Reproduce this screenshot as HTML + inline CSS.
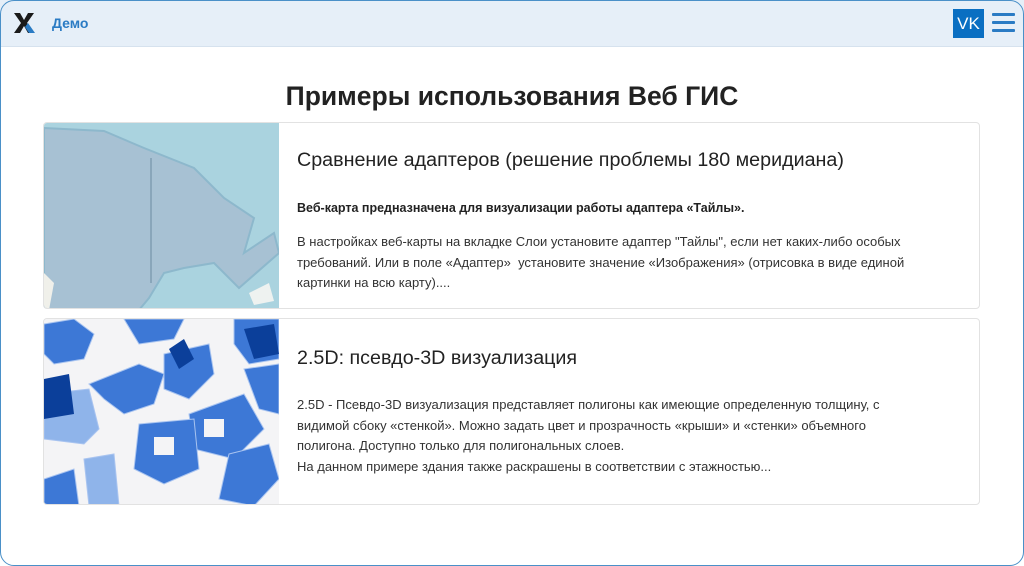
<!DOCTYPE html>
<html><head><meta charset="utf-8"><style>
*{box-sizing:border-box;margin:0;padding:0}
html,body{width:1024px;height:566px;overflow:hidden;background:#fff;font-family:"Liberation Sans",sans-serif;color:#222}
.frame{position:absolute;left:0;top:0;width:1024px;height:566px;border:1.5px solid #4a90c8;border-radius:14px;pointer-events:none;z-index:5}
.hdr{position:absolute;left:0;top:0;width:1024px;height:47px;background:#e6eff8;border-bottom:1px solid #d6e2ee}
.demo{position:absolute;left:52px;top:15px;font-size:14px;font-weight:bold;color:#2a7bc4}
.vk{position:absolute;left:953px;top:9px;width:31px;height:29px;background:#0a6fc2;color:#fff;font-size:17px;line-height:29px;text-align:center}
.burg{position:absolute;left:992px;top:13px;width:23px}
.burg i{display:block;height:2.5px;background:#2a7bc4;margin-bottom:5.5px;border-radius:1px}
h1{position:absolute;left:0;width:1024px;top:81px;text-align:center;font-size:26.5px;font-weight:bold;color:#222}
.card{position:absolute;left:43px;width:937px;height:187px;border:1px solid #e2e2e2;border-radius:4px;overflow:hidden}
.card svg{position:absolute;left:0;top:0}
.txt{position:absolute;left:253px;width:622px;font-size:13px;line-height:20.5px;color:#333}
.t{position:absolute;left:253px;font-size:19.7px;color:#222}
</style></head><body><div class="frame"></div>
<div class="hdr">
<svg style="position:absolute;left:13px;top:12px" width="22" height="22" viewBox="0 0 22 22"><path d="M1 1h6l4 7 4-7h6l-7 10 7 10h-6l-4-7-4 7H1l7-10z" fill="#1a1a1a"/><path d="M15 11l7 10h-6l-4-6z" fill="#2a7bc4"/></svg>
<div class="demo">Демо</div>
<div class="vk">VK</div>
<div class="burg"><i></i><i></i><i></i></div>
</div>
<h1>Примеры использования Веб ГИС</h1>
<div class="card" style="top:122px">
<svg width="235" height="187" viewBox="0 0 235 187"><rect width="235" height="187" fill="#aad3df"/><path d="M0 5 L60 8 100 25 150 45 180 75 210 95 200 130 230 110 235 130 195 165 170 140 140 145 120 150 105 175 95 187 0 187Z" fill="#a7c1d3" stroke="#8db8cc" stroke-width="2"/><line x1="107" y1="35" x2="107" y2="160" stroke="#6b8aa0" stroke-width="1"/><path d="M0 150 L10 160 5 187 0 187Z" fill="#f0f0ea"/><path d="M205 170 L225 160 230 178 210 182Z" fill="#eef2f0"/></svg>
<div class="t" style="top:26px">Сравнение адаптеров (решение проблемы 180 меридиана)</div>
<div class="txt" style="top:75px;font-weight:bold;color:#222;font-size:12.5px">Веб-карта предназначена для визуализации работы адаптера «Тайлы».</div>
<div class="txt" style="top:109px">В настройках веб-карты на вкладке Слои установите адаптер "Тайлы", если нет каких-либо особых требований. Или в поле «Адаптер»&nbsp; установите значение «Изображения» (отрисовка в виде единой картинки на всю карту)....</div>
</div>
<div class="card" style="top:318px">
<svg width="235" height="187" viewBox="0 0 235 187"><rect width="235" height="187" fill="#f4f4f6"/>
<g fill="#3d78d6" stroke="#a9c4f0" stroke-width="1">
<path d="M0 5 L30 0 50 15 40 40 10 45 0 35Z"/><path d="M80 0 L140 0 130 20 95 25Z"/><path d="M190 0 L235 0 235 40 205 45 190 25Z"/>
<path d="M45 65 L95 45 120 55 110 85 80 95 60 80Z"/><path d="M0 75 L45 70 55 110 40 125 0 120Z" fill="#8fb4ea"/>
<path d="M120 35 L165 25 170 55 145 80 120 70Z"/><path d="M145 95 L200 75 220 110 190 140 150 130Z"/>
<path d="M95 105 L150 100 155 150 120 165 90 150Z"/><path d="M185 135 L225 125 235 160 210 187 175 180Z"/>
<path d="M0 160 L30 150 35 187 0 187Z"/><path d="M40 140 L70 135 75 187 45 187Z" fill="#8fb4ea"/><path d="M200 50 L235 45 235 95 215 90Z"/>
</g>
<g fill="#0b3f9a"><path d="M125 30 L140 20 150 40 135 50Z"/><path d="M0 60 L25 55 30 95 0 100Z"/><path d="M200 10 L230 5 235 35 210 40Z"/></g>
<g fill="#f4f4f6"><rect x="110" y="118" width="20" height="18"/><rect x="160" y="100" width="20" height="18"/></g>
</svg>
<div class="t" style="top:28px">2.5D: псевдо-3D визуализация</div>
<div class="txt" style="top:76px;width:612px">2.5D - Псевдо-3D визуализация представляет полигоны как имеющие определенную толщину, с видимой сбоку «стенкой». Можно задать цвет и прозрачность «крыши» и «стенки» объемного полигона. Доступно только для полигональных слоев.<br>На данном примере здания также раскрашены в соответствии с этажностью...</div>
</div>
</body></html>
